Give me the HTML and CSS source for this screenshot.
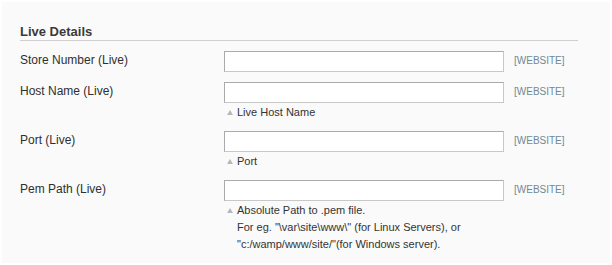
FILE: index.html
```html
<!DOCTYPE html>
<html>
<head>
<meta charset="utf-8">
<link rel="stylesheet" href="styles.css">
</head>
<body>
<div class="panel">
  <h4 class="section-title">Live Details</h4>
  <div class="form-row">
    <label class="label">Store Number (Live)</label>
    <div class="value"><input class="input-text" type="text"></div>
    <div class="scope">[WEBSITE]</div>
  </div>
  <div class="form-row">
    <label class="label">Host Name (Live)</label>
    <div class="value">
      <input class="input-text" type="text">
      <p class="note">Live Host Name</p>
    </div>
    <div class="scope">[WEBSITE]</div>
  </div>
  <div class="form-row">
    <label class="label">Port (Live)</label>
    <div class="value">
      <input class="input-text" type="text">
      <p class="note">Port</p>
    </div>
    <div class="scope">[WEBSITE]</div>
  </div>
  <div class="form-row">
    <label class="label">Pem Path (Live)</label>
    <div class="value">
      <input class="input-text" type="text">
      <p class="note">Absolute Path to .pem file.<br>For eg. "\var\site\www\" (for Linux Servers), or<br>"c:/wamp/www/site/"(for Windows server).</p>
    </div>
    <div class="scope">[WEBSITE]</div>
  </div>
</div>
</body>
</html>
```
FILE: styles.css
```css
html, body {
  margin: 0;
  padding: 0;
  background: #ffffff;
}
body {
  font-family: "Liberation Sans", Arial, sans-serif;
  color: #2f2f2f;
}
.panel {
  margin: 2px;
  height: 261px;
  box-sizing: border-box;
  background: #fafafa;
  padding: 22px 32px 0 18px;
}
.section-title {
  margin: 0 0 10px 0;
  font-size: 13px;
  line-height: 16px;
  font-weight: bold;
  color: #3a3a3a;
  border-bottom: 1px solid #cfcfcf;
}
.form-row {
  display: grid;
  grid-template-columns: 204px 280px auto;
  margin-bottom: 10px;
}
.label {
  font-size: 12px;
  line-height: 18px;
  color: #2f2f2f;
}
.input-text {
  display: block;
  width: 280px;
  height: 21px;
  box-sizing: border-box;
  margin: 0;
  padding: 2px;
  background: #ffffff;
  border: 1px solid;
  border-color: #aaaaaa #c8c8c8 #c8c8c8 #aaaaaa;
}
.note {
  position: relative;
  margin: 1px 0 0 0;
  padding-left: 13px;
  font-size: 11px;
  line-height: 17px;
  color: #333333;
}
.note::before {
  content: "";
  position: absolute;
  left: 3px;
  top: 6px;
  width: 0;
  height: 0;
  border-left: 3px solid transparent;
  border-right: 3px solid transparent;
  border-bottom: 5px solid #b5b9bc;
}
.scope {
  padding-left: 10px;
  padding-top: 1px;
  font-size: 10px;
  line-height: 18px;
  color: #6f8992;
}
```
